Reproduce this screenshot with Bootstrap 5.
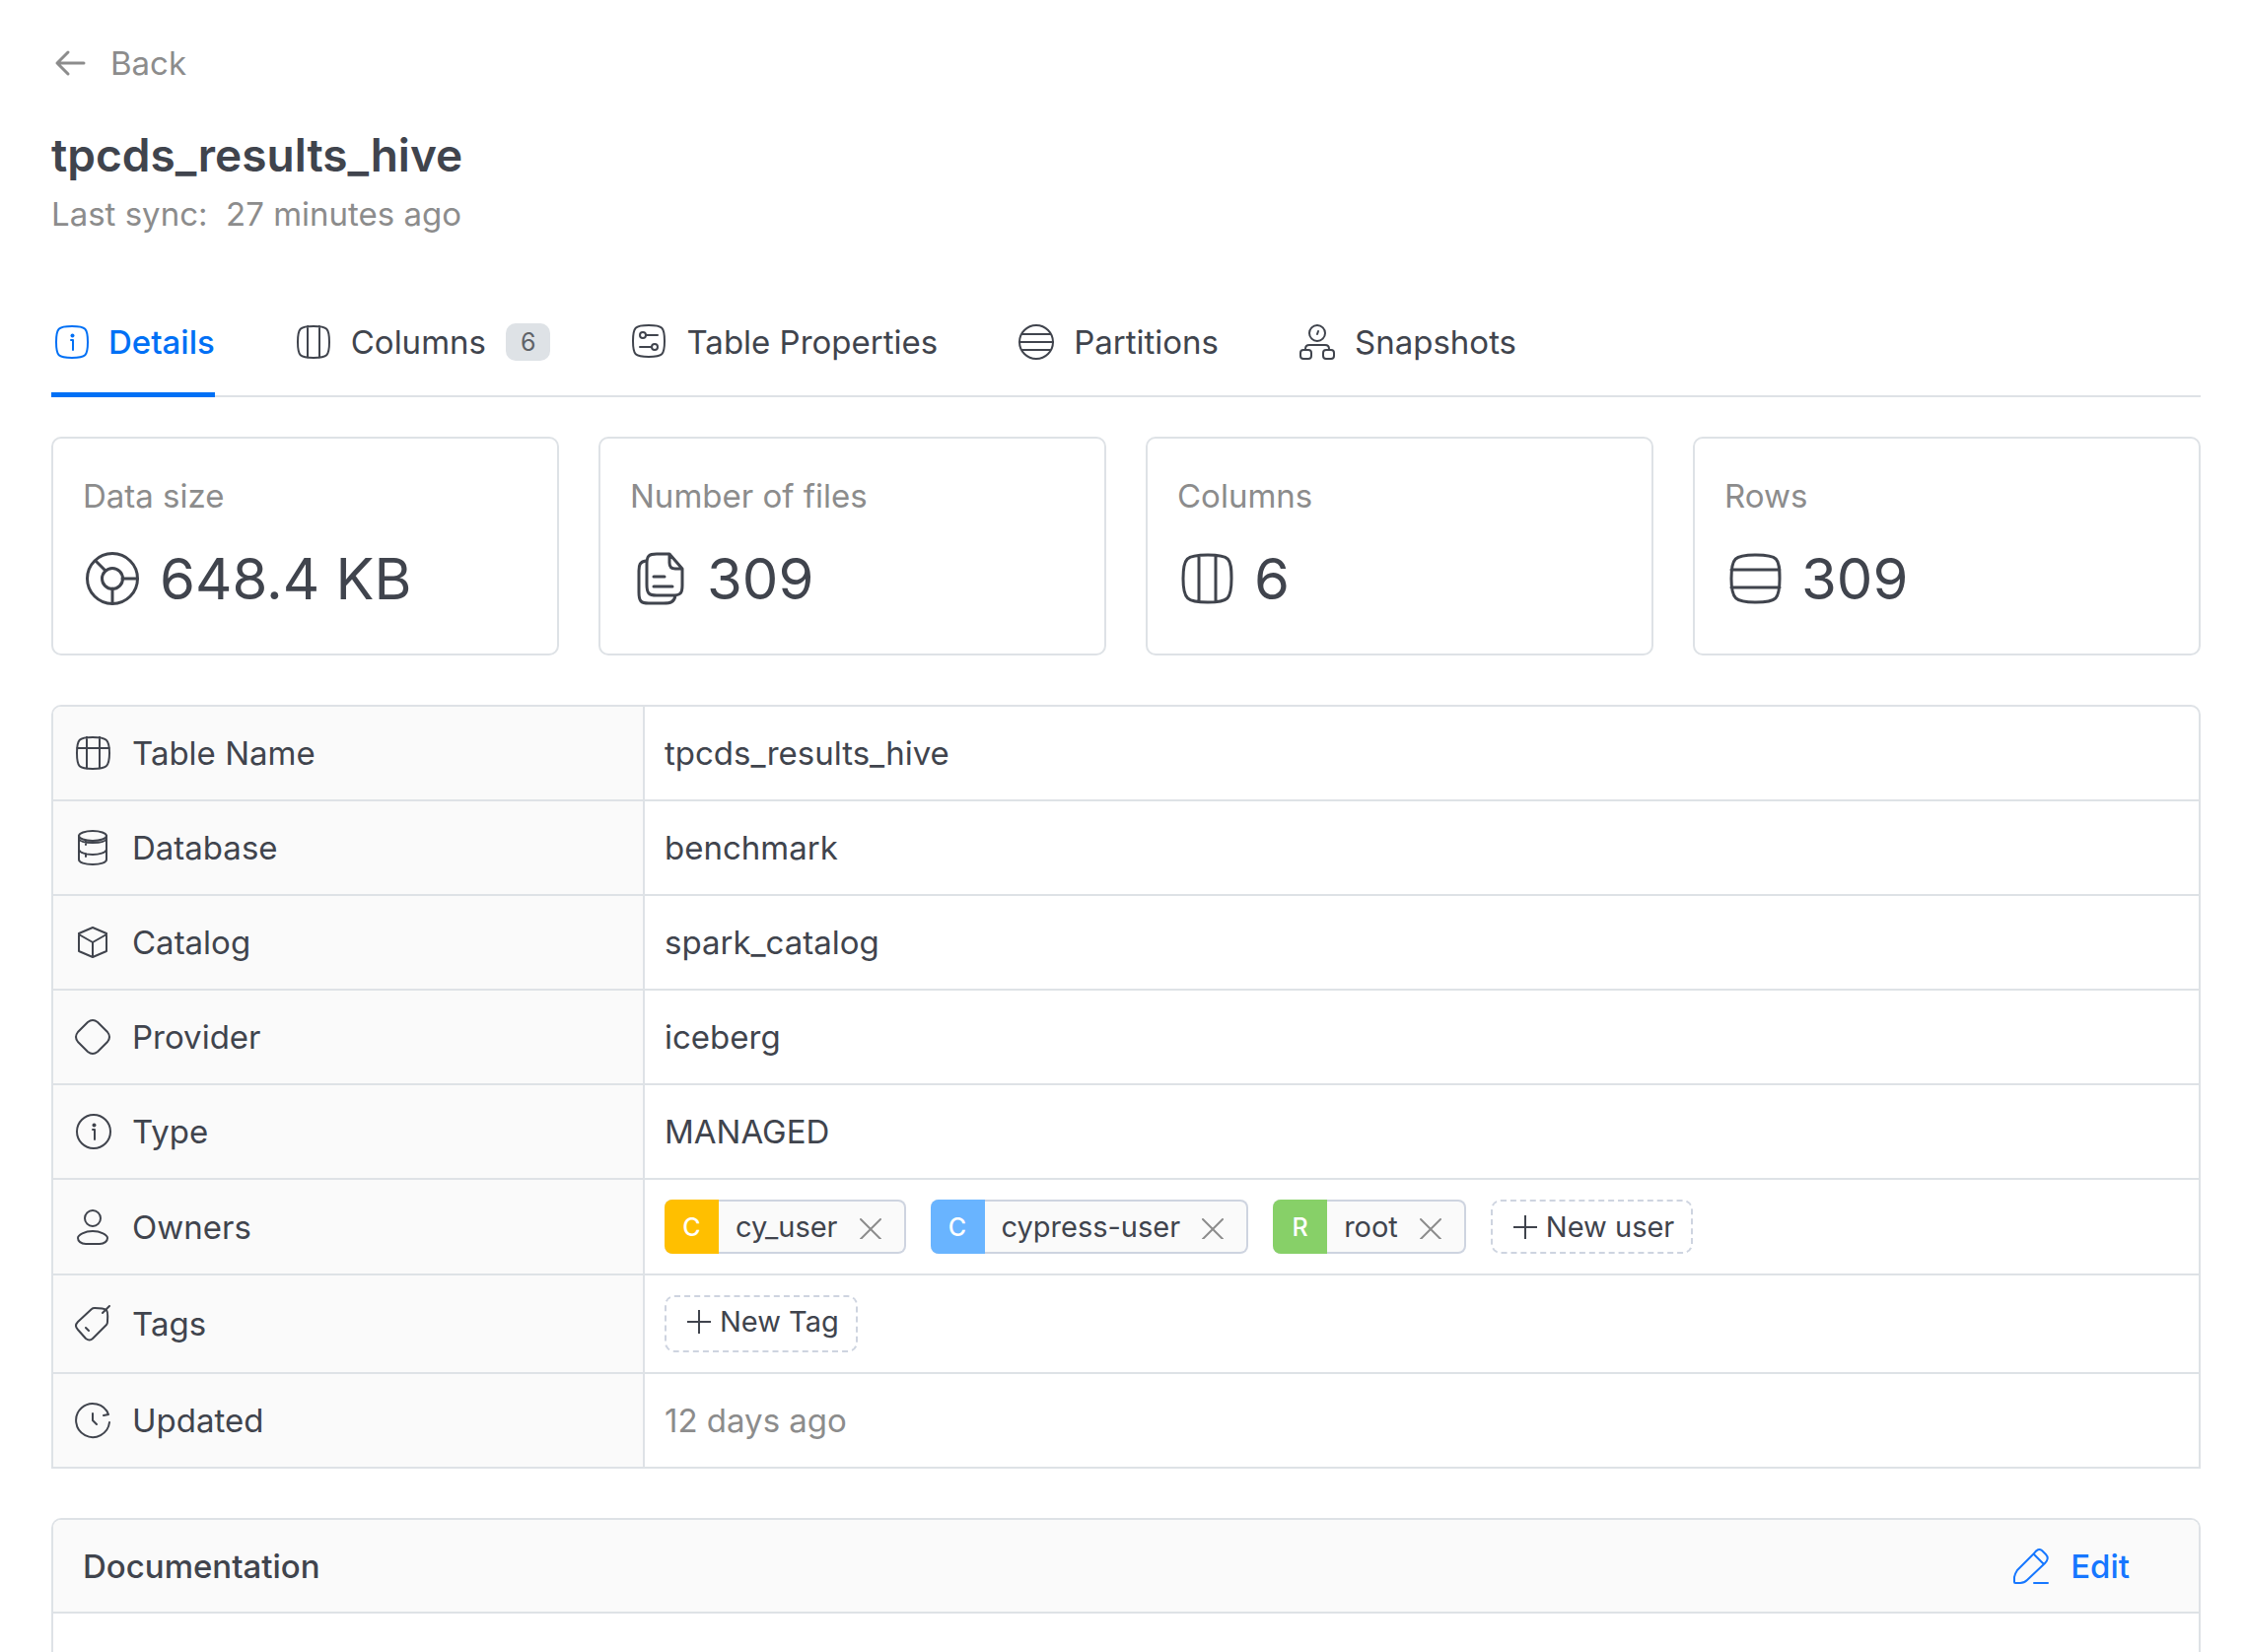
<!DOCTYPE html>
<html lang="en">
<head>
<meta charset="utf-8">
<meta name="viewport" content="width=device-width, initial-scale=1">
<title>tpcds_results_hive</title>
<link href="https://cdn.jsdelivr.net/npm/bootstrap@5.3.0/dist/css/bootstrap.min.css" rel="stylesheet">
<style>
  :root { --ink: #40444d; --soft: #8c8c8c; --line: #dee2e6; --accent: #0070f5; --edge: #ced4e0; }
  body { font-family: Inter, "Liberation Sans", sans-serif; font-size: 33px; line-height: 40px; color: var(--ink); background: #fff; }
  .page { padding: 44px 46px 0 52px; }
  .ico { width: 40px; height: 40px; flex: none; fill: none; stroke: currentColor; stroke-width: 2; stroke-linecap: round; stroke-linejoin: round; }
  .ico .solid { fill: currentColor; stroke: none; }
  .soft { color: var(--soft); }
  .back-link { gap: 20px; color: var(--soft); text-decoration: none; }
  .back-link .ico { stroke-width: 3; }
  .page-title { font-size: 46px; line-height: 60px; font-weight: 600; margin: 43px 0 10px; }
  .tabs { gap: 80px; margin-top: 90px; box-shadow: inset 0 -2px var(--line); }
  .tabs .nav-link { display: flex; align-items: center; gap: 18px; padding: 0 0 31px; border-bottom: 5px solid transparent; color: var(--ink); }
  .tabs .nav-link.active { color: var(--accent); border-color: var(--accent); font-weight: 500; }
  .tabs .count { font-size: 25px; line-height: 38px; padding: 0 15px; margin-left: 2px; border-radius: 10px; background: var(--line); color: #5f6368; font-weight: 400; }
  .stats { --bs-gutter-x: 40px; margin-top: 40px; }
  .panel { border: 2px solid var(--line); border-radius: 10px; }
  .stat { padding: 38px 30px 40px; }
  .stat-value { gap: 18px; margin-top: 28px; font-size: 58px; line-height: 72px; }
  .stat-value .ico { width: 60px; height: 60px; stroke-width: 3; }
  .info { border: 2px solid var(--line); border-radius: 10px 10px 0 0; margin-top: 50px; overflow: hidden; }
  .info table { width: 100%; border-collapse: separate; border-spacing: 0; }
  .info th, .info td { padding: 0 20px; height: 96px; vertical-align: middle; border-bottom: 2px solid var(--line); }
  .info tr:last-child > * { border-bottom: 0; height: 94px; }
  .info th { width: 600px; font-weight: 400; background: #fafafa; border-right: 2px solid var(--line); }
  .info .name { gap: 20px; }
  .info td.chips-cell { padding: 20px; }
  .chips { gap: 25px; font-size: 29px; }
  .chip { height: 55px; border: 2px solid var(--edge); border-left: 0; border-radius: 8px; background: #fafafa; padding-right: 22px; }
  .avatar { width: 55px; height: 55px; margin: -2px 17px -2px 0; border-radius: 8px 0 0 8px; color: #fff; font-size: 25px; font-weight: 500; }
  .bg-c1 { background: #ffbf00; } .bg-c2 { background: #69b4ff; } .bg-c3 { background: #87d068; }
  .bare { border: 0; background: none; padding: 0; color: inherit; }
  .chip .bare { margin-left: 21px; color: var(--soft); line-height: 0; }
  .chip .ico { width: 24px; height: 24px; }
  .add { gap: 8px; border: 2px dashed var(--edge); border-radius: 10px; background: #fff; color: var(--ink); padding: 0 17px 0 20px; height: 55px; }
  .add.tall { height: 58px; padding-bottom: 4px; }
  .add .ico { width: 26px; height: 26px; stroke-width: 2; stroke-linecap: butt; }
  .doc { margin-top: 50px; border-bottom: 0; border-radius: 10px 10px 0 0; }
  .doc-head { height: 95px; padding: 0 70px 0 30px; background: #fafafa; border-bottom: 2px solid var(--line); border-radius: 8px 8px 0 0; }
  .doc-head h2 { font-size: 33px; line-height: 40px; font-weight: 500; margin: 0; }
  .edit { gap: 20px; color: #1677ff; font-weight: 500; }
</style>
</head>
<body>
<main class="page min-vh-100 d-flex flex-column">
  <header>
    <a href="#" class="back-link d-inline-flex align-items-center align-top">
      <svg class="ico" viewBox="0 0 40 40"><path d="M6 20H33M17 9 6 20 17 31"/></svg>Back</a>
    <h1 class="page-title">tpcds_results_hive</h1>
    <div class="soft">Last sync:&nbsp; 27 minutes ago</div>
  </header>

  <nav class="nav tabs">
    <a class="nav-link active" aria-current="page" href="#">
      <svg class="ico" viewBox="0 0 40 40"><path d="M5 20C5 6 7 4 21 4S37 6 37 20 35 36 21 36 5 34 5 20ZM20 18H22V28"/><circle class="solid" cx="21.500" cy="13.500" r="2"/></svg>Details</a>
    <a class="nav-link" href="#">
      <svg class="ico" viewBox="0 0 40 40"><path d="M4 20C4 6 6 4 20 4S36 6 36 20 34 36 20 36 4 34 4 20ZM14 4V36M26 4V36"/></svg>Columns<span class="count">6</span></a>
    <a class="nav-link" href="#">
      <svg class="ico" viewBox="0 0 40 40"><path d="M4 19C4 5 6 3 20 3S36 5 36 19 34 35 20 35 4 33 4 19ZM17 13H29M11 25H22"/><circle cx="14" cy="13" r="3"/><circle cx="26" cy="25" r="3"/></svg>Table Properties</a>
    <a class="nav-link" href="#">
      <svg class="ico" viewBox="0 0 40 40"><circle cx="20" cy="20" r="17"/><path d="M6 12H34M3 20H37M6 28H34"/></svg>Partitions</a>
    <a class="nav-link" href="#">
      <svg class="ico" viewBox="0 0 40 40"><circle cx="20" cy="11" r="8"/><path d="M20 12 21 9M8 27C8 24 9 23 12 23H28C31 23 32 24 32 27"/><rect x="3" y="28" width="11" height="9" rx="3"/><rect x="26" y="28" width="11" height="9" rx="3"/></svg>Snapshots</a>
  </nav>

  <section class="row row-cols-4 stats">
    <div class="col"><div class="panel stat"><div class="soft">Data size</div>
      <div class="stat-value d-flex align-items-center"><svg class="ico" viewBox="0 0 60 60"><circle cx="30" cy="30" r="25.500"/><circle cx="30" cy="30" r="10.500"/><path d="M40 30H55M30 40V55M23 22 13 12"/></svg>648.4 KB</div></div></div>
    <div class="col"><div class="panel stat"><div class="soft">Number of files</div>
      <div class="stat-value d-flex align-items-center"><svg class="ico" viewBox="0 0 60 60"><path d="M40 5H27C19 5 17 7 17 15V36C17 45 19 47 27 47H43C51 47 53 45 53 37V20ZM40 5V14C40 18 42 20 46 20H53M24 28H35M24 38H43M16 12C10 13 9 16 9 22V44C9 53 11 55 19 55H34C41 55 45 54 46 47"/></svg>309</div></div></div>
    <div class="col"><div class="panel stat"><div class="soft">Columns</div>
      <div class="stat-value d-flex align-items-center"><svg class="ico" viewBox="0 0 60 60"><path d="M6 30C6 9 9 6 31 6S55 9 55 30 52 54 31 54 6 51 6 30ZM22 7V53M39 7V53"/></svg>6</div></div></div>
    <div class="col"><div class="panel stat"><div class="soft">Rows</div>
      <div class="stat-value d-flex align-items-center"><svg class="ico" viewBox="0 0 60 60"><path d="M7 30C7 9 10 6 32 6S56 9 56 30 53 54 32 54 7 51 7 30ZM7 21H56M7 39H56"/></svg>309</div></div></div>
  </section>

  <section class="info">
    <table>
      <tbody>
        <tr><th scope="row"><div class="name d-flex align-items-center"><svg class="ico" viewBox="0 0 40 40"><path d="M4 20C4 6 6 4 20 4S37 6 37 20 34 36 20 36 4 34 4 20ZM14 4V36M27 4V36M4 15H37"/></svg>Table Name</div></th><td>tpcds_results_hive</td></tr>
        <tr><th scope="row"><div class="name d-flex align-items-center"><svg class="ico" viewBox="0 0 40 40"><ellipse cx="20" cy="8" rx="14" ry="5"/><path d="M6 8V32C6 35 12 37 20 37S34 35 34 32V8M6 11C7 14 13 15 20 15S33 14 34 11M6 22C7 25 13 27 20 27S33 25 34 22M13 14V17M13 26V29"/></svg>Database</div></th><td>benchmark</td></tr>
        <tr><th scope="row"><div class="name d-flex align-items-center"><svg class="ico" viewBox="0 0 40 40"><path d="M20 5 34 11V29L20 35 6 29V11ZM6 12 20 20 34 12M20 20V35"/></svg>Catalog</div></th><td>spark_catalog</td></tr>
        <tr><th scope="row"><div class="name d-flex align-items-center"><svg class="ico" viewBox="0 0 40 40"><path d="M15 5Q20 1 25 5L35 15Q39 20 35 25L25 35Q20 39 15 35L5 25Q1 20 5 15Z"/></svg>Provider</div></th><td>iceberg</td></tr>
        <tr><th scope="row"><div class="name d-flex align-items-center"><svg class="ico" viewBox="0 0 40 40"><circle cx="21" cy="20" r="17"/><path d="M20 18H22V28"/><circle class="solid" cx="21.500" cy="13.500" r="2"/></svg>Type</div></th><td>MANAGED</td></tr>
        <tr><th scope="row"><div class="name d-flex align-items-center"><svg class="ico" viewBox="0 0 40 40"><circle cx="20" cy="11" r="8"/><path d="M13 37C8 37 5 34 5 31 5 28 12 24 20 24S35 28 35 31C35 34 32 37 27 37Z"/></svg>Owners</div></th>
          <td class="chips-cell"><div class="chips d-flex">
            <span class="chip d-flex align-items-center"><span class="avatar bg-c1 d-flex align-items-center justify-content-center">C</span>cy_user<button class="bare" type="button" aria-label="Remove cy_user"><svg class="ico" viewBox="0 0 24 24"><path d="M2 4 22 24M22 4 2 24"/></svg></button></span>
            <span class="chip d-flex align-items-center"><span class="avatar bg-c2 d-flex align-items-center justify-content-center">C</span>cypress-user<button class="bare" type="button" aria-label="Remove cypress-user"><svg class="ico" viewBox="0 0 24 24"><path d="M2 4 22 24M22 4 2 24"/></svg></button></span>
            <span class="chip d-flex align-items-center"><span class="avatar bg-c3 d-flex align-items-center justify-content-center">R</span>root<button class="bare" type="button" aria-label="Remove root"><svg class="ico" viewBox="0 0 24 24"><path d="M2 4 22 24M22 4 2 24"/></svg></button></span>
            <button class="add d-flex align-items-center" type="button"><svg class="ico" viewBox="0 0 26 26"><path d="M1 13H25M13 1V25"/></svg>New user</button>
          </div></td></tr>
        <tr><th scope="row"><div class="name d-flex align-items-center"><svg class="ico" viewBox="0 0 40 40"><path d="M19 5Q20 4 22 4C28 4 31 4 34 6 36 9 35 13 35 18Q35 20 34 21L20 35Q17 38 13 35L5 26Q1 22 5 18ZM30 9 37 2M13 24 16 27"/></svg>Tags</div></th>
          <td class="chips-cell"><div class="chips d-flex"><button class="add tall d-flex align-items-center" type="button"><svg class="ico" viewBox="0 0 26 26"><path d="M1 13H25M13 1V25"/></svg>New Tag</button></div></td></tr>
        <tr><th scope="row"><div class="name d-flex align-items-center"><svg class="ico" viewBox="0 0 40 40"><path d="M36 14A17 17 0 1 0 37 22M31 15 36 14M20 13V20L24 24"/></svg>Updated</div></th><td class="soft">12 days ago</td></tr>
      </tbody>
    </table>
  </section>

  <section class="panel doc flex-grow-1">
    <div class="doc-head d-flex align-items-center justify-content-between">
      <h2>Documentation</h2>
      <button class="bare edit d-flex align-items-center" type="button"><svg class="ico" viewBox="0 0 40 40"><path d="M23 7 6 24Q4 27 3 31V36Q3 37 4 37H9Q13 37 16 34L34 17Q39 12 35 8L31 4Q27 1 23 7ZM23 8 33 18M23 37H37"/></svg>Edit</button>
    </div>
  </section>
</main>
<script src="https://cdn.jsdelivr.net/npm/bootstrap@5.3.0/dist/js/bootstrap.bundle.min.js"></script>
</body>
</html>
